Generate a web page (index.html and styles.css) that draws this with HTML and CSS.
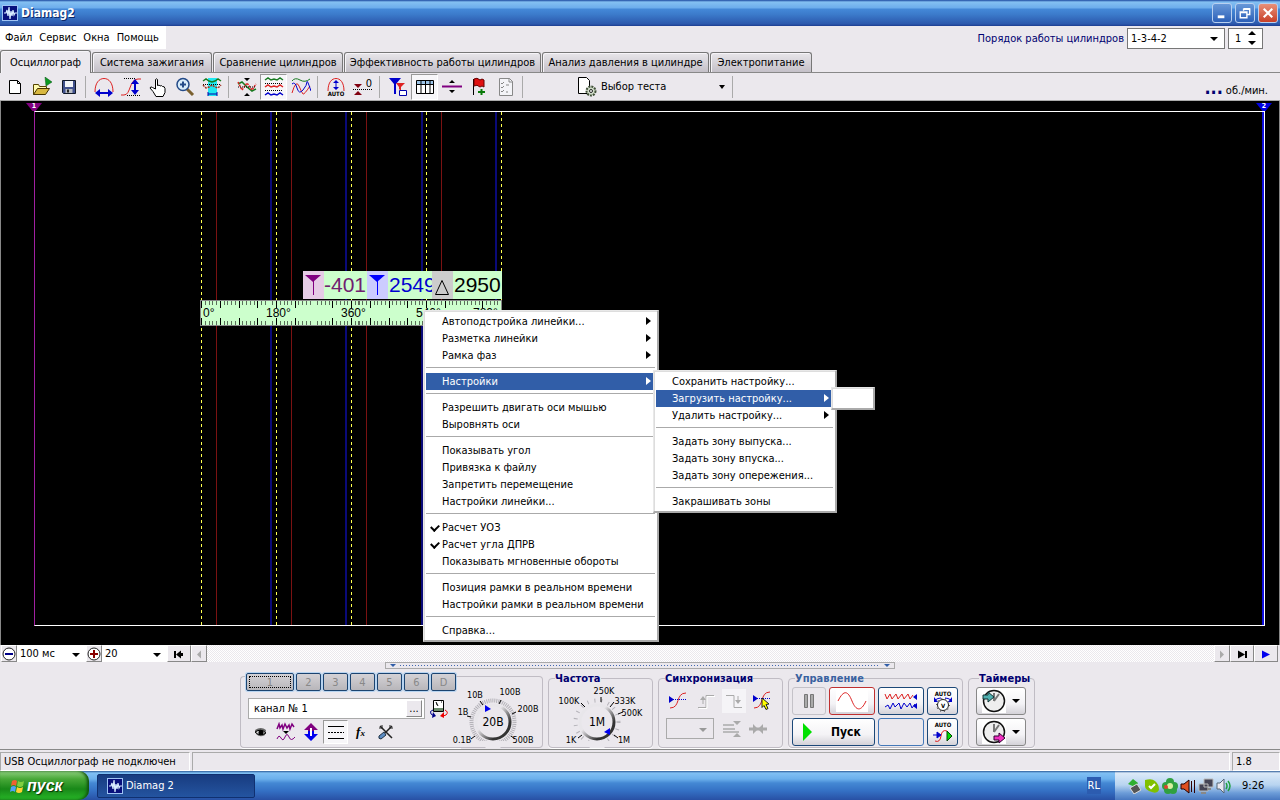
FILE: index.html
```html
<!DOCTYPE html>
<html lang="ru">
<head>
<meta charset="utf-8">
<title>Diamag2</title>
<link rel="stylesheet" href="styles.css">
</head>
<body>
<svg class="defs" aria-hidden="true">
  <symbol id="app" viewBox="0 0 16 16"><rect width="16" height="16" fill="#9fc4f4"/><rect x="1" y="1" width="14" height="14" fill="#08107c"/><path d="M2 8h2l1-3 1 6 1-9 1 12 1-8 1 5 1-6 1 5 1-2h2" fill="none" stroke="#d8ecff" stroke-width="1.2"/></symbol>
</svg>
<header class="titlebar">
  <svg class="i16"><use href="#app"/></svg>
  <h1>Diamag2</h1>
  <button class="win" aria-label="Свернуть"><svg viewBox="0 0 19 19"><path d="M5 13.500h7" stroke="#fff" stroke-width="3"/></svg></button>
  <button class="win" aria-label="Развернуть"><svg viewBox="0 0 19 19"><path d="M8 7V5.500h6.500V11H12M4.500 8.500h7v6h-7zM4 9h8M8 5h7" fill="none" stroke="#fff" stroke-width="1.500"/></svg></button>
  <button class="win close" aria-label="Закрыть"><svg viewBox="0 0 19 19"><path d="M5 5l9 9M14 5l-9 9" stroke="#fff" stroke-width="2.200"/></svg></button>
</header>
<div class="menurow">
  <nav class="menubar"><button>Файл</button><button>Сервис</button><button>Окна</button><button>Помощь</button></nav>
  <label class="order" for="order">Порядок работы цилиндров</label>
  <span class="combo framed w97"><select id="order"><option>1-3-4-2</option></select></span>
  <span class="spin"><input aria-label="Цилиндр" value="1"><svg viewBox="0 0 8 14"><path d="M4 0l4 4H0zM4 14l4-4H0z"/></svg></span>
</div>
<nav class="tabs">
  <button class="tab on t1">Осциллограф</button><button class="tab t2">Система зажигания</button><button class="tab t3">Сравнение цилиндров</button><button class="tab t4">Эффективность работы цилиндров</button><button class="tab t5">Анализ давления в цилиндре</button><button class="tab t6">Электропитание</button>
</nav>
<div class="toolbar">
  <button aria-label="Новый"><svg viewBox="0 0 20 20"><path d="M4.500 3.500h8l3 3v10h-11z" fill="#fff" stroke="#000"/><path d="M12.500 3.500v3h3" fill="none" stroke="#000"/></svg></button>
  <button aria-label="Открыть"><svg viewBox="0 0 20 20"><path d="M1.500 17.500v-10h5l1 2h7v3" fill="#fffbb0" stroke="#554400"/><path d="M1.500 17.500l4-6h12l-4 6z" fill="#d8b840" stroke="#443300"/><path d="M13 0l7 5-6 4z" fill="#0a9a20" stroke="#065010" stroke-width=".5"/></svg></button>
  <button aria-label="Сохранить"><svg viewBox="0 0 20 20"><path d="M3.500 3.500h13v13h-12l-1-1z" fill="#40508c" stroke="#101828"/><path d="M6 4h8v6H6z" fill="#f2f4f8"/><path d="M6.500 12h7v4h-7z" fill="#b8bcc4"/><path d="M8 12.500h2v3H8z" fill="#222"/></svg></button>
  <i class="sep"></i>
  <button aria-label="Период"><svg viewBox="0 0 20 20"><path d="M1 15C1 6 5 1.500 10 1.500S19 6 19 15" fill="none" stroke="#d22"/><path d="M3 16h14" stroke="#00c" stroke-width="2"/><path d="M1 16l5-4v8zM19 16l-5-4v8z" fill="#00c"/></svg></button>
  <button aria-label="Амплитуда"><svg viewBox="0 0 20 20"><path d="M0 18h3C10 18 8 2 17 2h3" fill="none" stroke="#d22"/><path d="M3 1.500h12M6 18.500h14" stroke="#000" stroke-dasharray="1 1"/><path d="M14 5v11" stroke="#00c" stroke-width="2"/><path d="M14 2l4 5h-8zM14 18l4-5h-8z" fill="#00c"/></svg></button>
  <button aria-label="Рука"><svg viewBox="0 0 20 20"><path d="M7.500 12V2.500q1.500-1.500 2 0v6q2-1 2.500.5 2-1 2.500.5 2-.5 2.500 2v4l-2 4h-7l-3-5-3-3.500q.5-2 2.500-.5z" fill="#fff" stroke="#000"/></svg></button>
  <button aria-label="Масштаб"><svg viewBox="0 0 20 20"><path d="M12 12l6 6" stroke="#7a6030" stroke-width="3"/><circle cx="8" cy="7.500" r="6" fill="#d8ecfa" stroke="#234a88" stroke-width="1.500"/><path d="M5 7.500h6M8 4.500v6" stroke="#234a88" stroke-width="2"/></svg></button>
  <button aria-label="Фрагмент"><svg viewBox="0 0 20 20"><path d="M6 1h9v18H6z" fill="#20e8f0"/><path d="M1 4l3-2 3 2 3 1 3-1 3-2 3 2" fill="none" stroke="#177a20" stroke-width="1.500"/><path d="M1 7.500h18" stroke="#000" stroke-dasharray="1 1"/><path d="M1 8l3 3 3-1 3-2 3 2 3 1 3-3" fill="none" stroke="#a03020" stroke-width="1.500" stroke-dasharray="2 1"/><path d="M6 17h9M6 15v4M15 15v4" stroke="#00a"/></svg></button>
  <i class="sep"></i>
  <button aria-label="Совместить"><svg viewBox="0 0 20 20"><path d="M1 7l4-2 5 5 5 4 4-2" fill="none" stroke="#177a20" stroke-width="1.500"/><path d="M1 5l4 8 5-7 5 7 4-6" fill="none" stroke="#d22" stroke-width="1.500" stroke-dasharray="2 1"/><path d="M1 10h18" stroke="#000" stroke-dasharray="1 1"/><path d="M7 1h6l-3 3zM7 19h6l-3-3z"/></svg></button>
  <button class="on" aria-label="Раздельно"><svg viewBox="0 0 20 20"><g fill="none" stroke-width="1.500"><path d="M1 3l3-2 3 2 3-1 3 1 3-2 3 2" stroke="#177a20"/><path d="M1 10l3-2 3 2 3-1 3 1 3-2 3 2" stroke="#d22"/><path d="M1 18l3-2 3 2 3-1 3 1 3-2 3 2" stroke="#00c"/><path d="M1 6.500h18M1 13.500h18" stroke="#000" stroke-width="1" stroke-dasharray="1 1"/></g></svg></button>
  <button aria-label="Наложение"><svg viewBox="0 0 20 20"><g fill="none"><path d="M1 4q3-4 8-1t10-1" stroke="#177a20"/><path d="M1 16q4-14 7-7t4 8 7-8" stroke="#d22"/><path d="M1 7q3-3 5 4t6 2 4-8 4 9" stroke="#00c"/></g></svg></button>
  <i class="sep"></i>
  <button aria-label="Авто"><svg viewBox="0 0 20 20"><path d="M2 14C2 5 6 1.500 10 1.500S18 5 18 14" fill="none" stroke="#d22"/><path d="M10 5v6" stroke="#00c"/><path d="M10 3l3 3H7zM10 13l3-3H7z" fill="#00c"/><text x="10" y="19" class="micro">AUTO</text></svg></button>
  <button aria-label="Обнулить"><svg viewBox="0 0 20 20"><path d="M1 7h8l-4 4zM1 18h8l-4-4z" fill="#800010"/><path d="M0 12.500h20" stroke="#000" stroke-dasharray="1 1"/><text x="16" y="10" class="zero">0</text></svg></button>
  <i class="sep"></i>
  <button aria-label="Маркеры"><svg viewBox="0 0 20 20"><path d="M1 1h12L8 7v10H6V7z" fill="#00c"/><path d="M8 6h9l-4 4v4l-2-2v-2z" fill="#d22"/><path d="M11.500 13.500h7v5h-7z" fill="#fff" stroke="#00a"/></svg></button>
  <button class="on" aria-label="Таблица"><svg viewBox="0 0 20 20"><path d="M1.500 3.500h17v13h-17z" fill="#fff" stroke="#000"/><path d="M2 4h16v3H2z" fill="#9cc4e8"/><path d="M1 7.500h18M6 4v12M10.500 4v12M15 4v12" stroke="#000"/></svg></button>
  <button aria-label="Деление"><svg viewBox="0 0 20 20"><path d="M0 9.500h20" stroke="#800080" stroke-width="2"/><path d="M7 6h6l-3-3zM7 13h6l-3 3z"/></svg></button>
  <button aria-label="Флаг"><svg viewBox="0 0 20 20"><path d="M4.500 2v16" stroke="#000"/><path d="M5 2q3-2 6 1 2-2 4 0v7q-2-2-4 0-3-3-6-1z" fill="#e01010" stroke="#600"/><path d="M9 15h7M12.500 12v6" stroke="#087a08" stroke-width="2"/></svg></button>
  <button aria-label="Список"><svg viewBox="0 0 20 20"><path d="M3.500 1.500h10l3 3v14h-13z" fill="#f4f4f8" stroke="#888"/><path d="M13 1v4h4" fill="none" stroke="#888"/><path d="M5 6l1 1 2-2M5 10l1 1 2-2M5 14l1 1 2-2M10 15h2M10 8h3" fill="none" stroke="#888"/></svg></button>
  <i class="sep"></i>
  <button class="test"><svg viewBox="0 0 20 20"><path d="M1.500.5h8l3 3v13h-11z" fill="#fff" stroke="#000"/><circle cx="14" cy="14" r="4.500" fill="#d0dcc8" stroke="#405038" stroke-width="2" stroke-dasharray="2 1"/><circle cx="14" cy="14" r="1.500" fill="#fff" stroke="#222"/></svg><span>Выбор теста</span><b class="down"></b></button>
  <i class="sep"></i>
  <span class="rpm"><b>...</b>об./мин.</span>
</div>
<main class="scope">
  <div class="frame">
    <svg width="100%" height="100%" shape-rendering="crispEdges">
      <g stroke="#0a0a78" stroke-width="2"><line x1="236" x2="236" y2="100%"/><line x1="311" x2="311" y2="100%"/><line x1="387" x2="387" y2="100%"/><line x1="461" x2="461" y2="100%"/></g>
      <g stroke="#7a1212"><line x1="181.500" x2="181.500" y2="100%"/><line x1="256.500" x2="256.500" y2="100%"/><line x1="331.500" x2="331.500" y2="100%"/><line x1="406.500" x2="406.500" y2="100%"/></g>
      <g stroke="#ffff50" stroke-dasharray="3 3"><line x1="166.500" x2="166.500" y2="100%"/><line x1="241.500" x2="241.500" y2="100%"/><line x1="316.500" x2="316.500" y2="100%"/><line x1="391.500" x2="391.500" y2="100%"/><line x1="466.500" x2="466.500" y2="100%"/></g>
    </svg>
  </div>
  <span class="mark m1">1</span><span class="mark m2">2</span>
  <div class="readout">
    <span class="ico pk"><svg viewBox="0 0 20 28"><path d="M2 4h16l-8 7z" fill="#800080"/><path d="M10.500 8v16" stroke="#800080"/></svg></span><span class="val v1">-401</span>
    <span class="ico bl"><svg viewBox="0 0 20 28"><path d="M2 4h16l-8 7z" fill="#00f"/><path d="M10.500 8v16" stroke="#00f"/></svg></span><span class="val v2">2549</span>
    <span class="ico gr"><svg viewBox="0 0 20 28"><path d="M10 9.500l6.500 14h-13z" fill="none" stroke="#000"/></svg></span><span class="val v3">2950</span>
  </div>
  <div class="ruler">
    <svg viewBox="0 0 720 25" preserveAspectRatio="none" shape-rendering="crispEdges"><path d="M0 2.500h720M0 22.500h720" stroke="#5a6e5a" stroke-width="4" stroke-dasharray="2.400 6.600"/><path d="M0 4h720M0 21h720" stroke="#000" stroke-width="7" stroke-dasharray="2.400 42.600"/></svg>
    <div class="degrees"><span>0°</span><span>180°</span><span>360°</span><span>540°</span><span>720°</span></div>
  </div>
  <div class="menu menu1" role="menu">
    <button class="sub">Автоподстройка линейки...</button><button class="sub">Разметка линейки</button><button class="sub">Рамка фаз</button><hr>
    <button class="sub hot">Настройки</button><hr>
    <button>Разрешить двигать оси мышью</button><button>Выровнять оси</button><hr>
    <button>Показывать угол</button><button>Привязка к файлу</button><button>Запретить перемещение</button><button>Настройки линейки...</button><hr>
    <button class="chk">Расчет УОЗ</button><button class="chk">Расчет угла ДПРВ</button><button>Показывать мгновенные обороты</button><hr>
    <button>Позиция рамки в реальном времени</button><button>Настройки рамки в реальном времени</button><hr>
    <button>Справка...</button>
  </div>
  <div class="menu menu2" role="menu">
    <button>Сохранить настройку...</button><button class="sub hot">Загрузить настройку...</button><button class="sub">Удалить настройку...</button><hr>
    <button>Задать зону выпуска...</button><button>Задать зону впуска...</button><button>Задать зону опережения...</button><hr>
    <button>Закрашивать зоны</button>
  </div>
  <div class="menu menu3" role="menu"><button aria-label="Пусто"></button></div>
</main>
<div class="scroll">
  <button class="sq" aria-label="Уменьшить"><svg viewBox="0 0 16 16"><circle cx="8" cy="8" r="6" fill="#fff" stroke="#222"/><path d="M4 8h8" stroke="#008" stroke-width="2"/></svg></button>
  <span class="combo w69"><select aria-label="Развертка"><option>100 мс</option></select></span>
  <button class="sq" aria-label="Увеличить"><svg viewBox="0 0 16 16"><circle cx="8" cy="8" r="6" fill="#fff" stroke="#222"/><path d="M4 8h8M8 4v8" stroke="#800" stroke-width="2"/></svg></button>
  <span class="combo w64"><select aria-label="Масштаб"><option>20</option></select></span>
  <button class="nav" aria-label="В начало"><svg viewBox="0 0 16 16"><path d="M4 5v7" stroke="#000" stroke-width="2"/><path d="M5 8.500l5-4v8zM9 7h3v3H9z"/></svg></button>
  <button class="sq" aria-label="Назад"><svg viewBox="0 0 16 16"><path d="M6 8.500l4-4v8z" fill="#aaa"/></svg></button>
  <span class="track"></span>
  <button class="sq" aria-label="Вперед"><svg viewBox="0 0 16 16"><path d="M10 8.500l-4-4v8z" fill="#aaa"/></svg></button>
  <button class="nav" aria-label="В конец"><svg viewBox="0 0 16 16"><path d="M12 5v7" stroke="#000" stroke-width="2"/><path d="M11 8.500l-7-4v8z"/></svg></button>
  <button class="nav" aria-label="Пуск"><svg viewBox="0 0 16 16"><path d="M12 8.500l-8-4v8z" fill="#00e"/></svg></button>
</div>
<div class="splitter"><b></b><i></i><b></b></div>
<section class="panel">
  <fieldset class="channel">
    <div class="chans"><button class="first">1</button><button>2</button><button>3</button><button>4</button><button>5</button><button>6</button><button>D</button></div>
    <div class="chname"><span class="box"><input aria-label="Имя канала" value="канал № 1"><button aria-label="Выбрать">...</button></span><svg class="i20" viewBox="0 0 20 20"><path d="M4.500 1.500h10v11h-10z" fill="#fff" stroke="#000"/><path d="M5 9h9v3H5z" fill="#6a8a6a"/><path d="M7 3l2 4M12 3h1M7 5h1" stroke="#000"/><path d="M4 11q-4 1-2 4l3 2" fill="none" stroke="#008"/><path d="M4 13l3 4-4 2z" fill="#008"/><path d="M16 11q4 2 1 5l-3 1" fill="none" stroke="#e00"/><path d="M15 13l-4 4 4 2z" fill="#e00"/></svg></div>
    <div class="chtools">
      <button aria-label="Видимость"><svg viewBox="0 0 20 20"><path d="M4 8q6-4 11 0l-1 5q-5 3-9-1z" fill="#666"/><path d="M4 10q6-4 11 1-6 4-11-1z" fill="#ddd" stroke="#000"/><circle cx="10" cy="10.500" r="2.500"/></svg></button>
      <button aria-label="Фильтр"><svg viewBox="0 0 20 20"><path d="M1 7l2-5 1 4 2-3 1 4 2-5 2 4 2-3 1 4 2-5 2 3" fill="none" stroke="#800080" stroke-width="1.500"/><path d="M7 9h6l-3 3z"/><path d="M1 17q2-5 4-1t4-1 4 0 6 0" fill="none" stroke="#800080"/></svg></button>
      <button aria-label="Инверсия"><svg viewBox="0 0 20 20"><path d="M10 1l7 7h-4v3H7V8H3z" fill="#800080"/><path d="M10 19l7-7h-4V9H7v3H3z" fill="#00e"/><path d="M10 6v8" stroke="#fff" stroke-width="2"/></svg></button>
      <button class="on" aria-label="Линии"><svg viewBox="0 0 20 20"><path d="M2 4.500h16M2 16.500h16" stroke="#000"/><path d="M2 10.500h16" stroke="#000" stroke-dasharray="2 1"/></svg></button>
      <button aria-label="Функция"><em>f<small>x</small></em></button>
      <button aria-label="Настройки"><svg viewBox="0 0 20 20"><path d="M4 4l12 12M16 4l-7 7" stroke="#222" stroke-width="1.500"/><path d="M14 3v3h3M3 6h3V3" fill="none" stroke="#222"/><path d="M8 10l-5 4q-1 3 2 3l5-4z" fill="#5c8cc4" stroke="#234"/></svg></button>
    </div>
  </fieldset>
  <div class="knob kv"><svg viewBox="0 0 86 70">
    <defs><linearGradient id="k" x1="0" y1="0" x2="1" y2="1"><stop offset=".4" stop-color="#e8e6ea"/><stop offset=".75" stop-color="#333"/></linearGradient></defs>
    <circle cx="37" cy="43" r="21.500" fill="none" stroke="#b4b2b8" stroke-width="4" stroke-dasharray="1 1"/>
    <path d="M23 62h28l-7 7H30z" fill="#ebe8ed"/>
    <circle cx="37" cy="43" r="17" fill="#ebe8ed" stroke="url(#k)" stroke-width="3"/><path d="M24 22l3 4M43 25l2-4M56 35l4-2M55 57l4 3M19 57l-4 3M15 38l-4-1" stroke="#000"/><path d="M29 26l6 4-6 3z" fill="#00e"/>
    <text x="37" y="47" class="kval">20В</text><text x="19" y="19">10В</text><text x="54" y="16">100В</text><text x="7" y="36">1В</text><text x="72" y="33">200В</text><text x="6" y="64">0.1В</text><text x="67" y="64">500В</text></svg></div>
  <fieldset class="freq"><legend>Частота</legend><div class="knob kf"><svg viewBox="0 0 94 70">
    <circle cx="45" cy="43" r="21.500" fill="none" stroke="#b4b2b8" stroke-width="4" stroke-dasharray="1 6"/>
    <path d="M33 62h26l-7 7H38z" fill="#ebe8ed"/>
    <circle cx="45" cy="43" r="17" fill="#ebe8ed" stroke="url(#k)" stroke-width="3"/><path d="M29 24l4 4M49 18v5M58 28l4-5M66 35l5-2M62 56l4 3M30 56l-4 3" stroke="#000"/><path d="M58 49v7l-6-3z" fill="#00e"/>
    <text x="45" y="47" class="kval">1М</text><text x="52" y="15">250K</text><text x="17" y="25">100K</text><text x="73" y="25">333K</text><text x="80" y="37">500K</text><text x="19" y="64">1K</text><text x="72" y="64">1М</text></svg></div></fieldset>
  <fieldset class="sync"><legend>Синхронизация</legend>
    <div class="row4">
      <button aria-label="Уровень"><svg viewBox="0 0 20 20"><path d="M2 17C13 17 7 2 18 2" fill="none" stroke="#d22"/><path d="M5 8.500h13" stroke="#00c" stroke-dasharray="1 1"/><path d="M1 5l5 3.500L1 12z" fill="#00c"/></svg></button>
      <button aria-label="Фронт"><svg viewBox="0 0 20 20"><path d="M2 16.500h8v-12h8" fill="none" stroke="#aaa"/><path d="M3 17.500h8v-12h8" fill="none" stroke="#fff"/><path d="M7 13V8" stroke="#aaa"/><path d="M4 9h6L7 5z" fill="#aaa"/></svg></button>
      <button class="hatch" aria-label="Спад"><svg viewBox="0 0 20 20"><path d="M2 4.500h8v12h8" fill="none" stroke="#aaa"/><path d="M14 5v6" stroke="#aaa"/><path d="M11 9h6l-3 4z" fill="#aaa"/></svg></button>
      <button aria-label="Курсор"><svg viewBox="0 0 20 20"><path d="M2 17C13 17 7 1 18 1" fill="none" stroke="#d22"/><path d="M1 7.500h18" stroke="#00c" stroke-dasharray="1 1"/><path d="M1 4l5 3.500L1 11z" fill="#00c"/><path d="M10 7l7 6-3 .5 2 4-2 1-2-4-2 2z" fill="#ff0" stroke="#222"/></svg></button>
    </div>
    <div class="row3"><span class="combo framed off"><select aria-label="Источник" disabled><option></option></select></span><svg class="i20" viewBox="0 0 20 20"><path d="M2 6h11M2 13h16M2 10h12" stroke="#aaa" stroke-width="1.500"/><path d="M12 2h8l-4 4zM12 18h8l-4-4z" fill="#aaa"/></svg><svg class="i20" viewBox="0 0 20 20"><path d="M1 10h18" stroke="#aaa" stroke-width="3"/><path d="M5 5l5 5-5 5zM15 5l-5 5 5 5z" fill="#aaa"/></svg></div>
  </fieldset>
  <fieldset class="ctrl"><legend>Управление</legend>
    <div class="grid">
      <div class="two"><button class="btn dis" aria-label="Пауза"><svg viewBox="0 0 20 20"><path d="M5.500 3.500h3v13h-3zM11.500 3.500h3v13h-3z" fill="#aaa" stroke="#777"/></svg></button><button class="btn red" aria-label="Сигнал"><svg class="sine" viewBox="0 0 32 22"><path d="M0 0h32v22H0z" fill="#fff"/><path d="M2 11C8-1 12 1 16 11s9 11 14 0" fill="none" stroke="#d22"/></svg></button></div>
      <button class="btn" aria-label="Сигналы"><svg class="sine" viewBox="0 0 34 22"><path d="M1 4l2 5 3-5 2 5 4-5 2 5 4-5 2 5 4-5 2 5 3-4" fill="none" stroke="#d22"/><path d="M1 17l3-2 2 4 3-6 2 4 4-4 2 6 3-6 3 4 3-4 2 5 3-4" fill="none" stroke="#00c"/><path d="M29 7l4-3v6zM29 16l4-3v6z" fill="#00c"/></svg></button>
      <button class="btn" aria-label="Авто"><svg class="i22" viewBox="0 0 22 22"><text x="11" y="6" class="micro">AUTO</text><circle cx="11" cy="15" r="5.500" fill="#fff" stroke="#222"/><circle cx="11" cy="15" r="6.500" fill="none" stroke="#222" stroke-dasharray="1 3"/><path d="M3 10q3-2 6-2M19 10q-3-2-6-2" fill="none" stroke="#00c"/><path d="M2 7v5h4zM20 7v5h-4z" fill="#00c"/><text x="11" y="18" class="micro">V</text></svg></button>
      <button class="btn start"><svg viewBox="0 0 14 20"><path d="M2 1l9 9-9 9z" fill="#00e000"/></svg>Пуск</button>
      <button class="btn empty" aria-label="Состояние"></button>
      <button class="btn" aria-label="Автозапуск"><svg class="i22" viewBox="0 0 22 22"><text x="11" y="6" class="micro">AUTO</text><path d="M3 20q5 2 6-5t6-5" fill="none" stroke="#d22"/><path d="M1 14h4M5 11l4 3-4 3z" stroke="#00c" fill="#00c"/><path d="M15 10l5 5-5 5z" fill="#0d0" stroke="#040"/></svg></button>
    </div>
  </fieldset>
  <fieldset class="timers"><legend>Таймеры</legend>
    <button class="btn tm" aria-label="Таймер пуска"><svg viewBox="0 0 24 24"><path d="M0 0h24v24H0z" fill="#fff"/><circle cx="12" cy="12" r="10.500" fill="#eee" stroke="#111" stroke-width="1.500"/><path d="M12 12V4M12 12l5-7" stroke="#777" stroke-width="2"/><path d="M1 6h5V3l6 5-6 5v-3H1z" fill="#50b0b0" stroke="#133"/></svg><b class="down"></b></button>
    <button class="btn tm" aria-label="Таймер остановки"><svg viewBox="0 0 24 24"><path d="M0 0h24v24H0z" fill="#fff"/><circle cx="12" cy="12" r="10.500" fill="#eee" stroke="#111" stroke-width="1.500"/><path d="M12 12V4M12 12l5-7" stroke="#777" stroke-width="2"/><path d="M12 16h5v-3l6 5-6 5v-3h-5z" fill="#f030c0" stroke="#303"/></svg><b class="down"></b></button>
  </fieldset>
</section>
<footer class="status"><span class="s1">USB Осциллограф не подключен</span><span class="s2"></span><span class="s3">1.8</span></footer>
<div class="taskbar">
  <button class="startbtn"><svg viewBox="0 0 16 16"><path d="M2 3q3-2 5 0L6 8q-2-2-5 0z" fill="#f06030"/><path d="M8 3q3 2 6 0l-1 5q-3 2-6 0z" fill="#80d040"/><path d="M1 9q3-2 5 0l-1 5q-2-2-5 0z" fill="#50a0f8"/><path d="M7 9q3 2 6 0l-1 5q-3 2-6 0z" fill="#ffd030"/></svg>пуск</button>
  <button class="task"><svg class="i16"><use href="#app"/></svg>Diamag 2</button>
  <span class="lang">RL</span>
  <div class="tray">
    <svg viewBox="0 0 16 16"><path d="M2 6l5-5 5 4-3 4z" fill="#30b030"/><path d="M4 10l7-4 4 6-7 4z" fill="#555" stroke="#ddd"/></svg>
    <svg viewBox="0 0 16 16"><path d="M1 2q7-2 10 1 4 3 4 9-2 4-7 2Q1 12 1 8z" fill="#80c000"/><path d="M5 8l2 2 4-4" fill="none" stroke="#fff" stroke-width="2"/></svg>
    <svg viewBox="0 0 16 16"><g fill="#30a040"><circle cx="8" cy="4" r="4"/><circle cx="4" cy="8" r="4"/><circle cx="12" cy="8" r="4"/><circle cx="6" cy="12" r="4"/><circle cx="11" cy="12" r="4"/></g><circle cx="8" cy="8" r="3" fill="#d8f0a0"/><circle cx="4" cy="9" r="2" fill="#e04030"/></svg>
    <svg viewBox="0 0 16 16"><path d="M1 6h3l5-4v13l-5-4H1z" fill="#e05020" stroke="#200"/><path d="M11.500 3v11M14.500 2v13" stroke="#300"/></svg>
    <svg viewBox="0 0 16 16"><path d="M6 1h9v8H6zM1 6h9v7H1z" fill="#445" stroke="#bbb"/><path d="M3 15h5M9 11h4" stroke="#888" stroke-width="2"/></svg>
    <svg viewBox="0 0 16 16"><path d="M1 5h3l4-4v14l-4-4H1z" fill="#e8e8f0" stroke="#567"/><path d="M10 5q2 3 0 6M12 3q4 5 0 10" fill="none" stroke="#20a040" stroke-width="1.500"/></svg>
    <time>9:26</time>
  </div>
</div>
</body>
</html>
```
FILE: styles.css
```css
* { box-sizing: border-box; }
body { margin: 0; height: 100vh; display: flex; flex-direction: column; overflow: hidden; background: #ebe8ed; color: #000; font: 11px/17px "DejaVu Sans Condensed", "Liberation Sans", sans-serif; }
button, input, select { font: inherit; color: inherit; margin: 0; padding: 0; border: 0; background: none; border-radius: 0; }
button { display: flex; align-items: center; justify-content: center; white-space: nowrap; }
select { appearance: none; width: 100%; height: 100%; padding-left: 3px; background: transparent; opacity: 1; }
svg { display: block; flex: none; }
.defs { display: none; }
.i16 { width: 16px; height: 16px; }
.i20 { width: 20px; height: 20px; }
.i22 { width: 22px; height: 22px; }
.down { width: 0; height: 0; border: 3px solid transparent; border-top: 4px solid #000; border-bottom: 0; }

.titlebar { height: 26px; flex: none; display: flex; align-items: center; gap: 2px; padding: 0 2px; background: linear-gradient(#1c48a0 0, #84c0f2 2px, #6cacec 8px, #4488d8 9px, #3c7ccc 14px, #2c58ac 24px, #1c3c90); }
.titlebar h1 { margin: 0; flex: 1; padding-left: 1px; color: #fff; font: bold 12px/18px "DejaVu Sans Condensed", sans-serif; text-shadow: 1px 1px #0c2868; }
.win { width: 20px; height: 20px; margin-left: 1px; border: 1px solid #b8d0f0; border-radius: 3px; background: linear-gradient(#6898d8, #2c60b8); }
.win svg { width: 18px; height: 18px; }
.close { background: linear-gradient(#e89078, #c84028); }

.menurow { height: 24px; flex: none; display: flex; align-items: center; padding-right: 17px; gap: 3px; }
.menubar { display: flex; height: 23px; width: 166px; align-self: flex-start; background: #fff; padding-left: 5px; gap: 7px; }
.order { margin-left: auto; color: #000070; }
.combo { position: relative; display: block; background: #fff; height: 17px; flex: none; }
.combo::after { content: ""; position: absolute; right: 6px; top: 50%; margin-top: -1px; border: 4px solid transparent; border-top-color: #000; border-bottom: 0; pointer-events: none; }
.framed { border: 1px solid #777; height: 21px; }
.w97 { width: 98px; }
.w69 { width: 69px; }
.w64 { width: 65px; }
.spin { display: flex; align-items: center; width: 35px; height: 21px; background: #fff; border: 1px solid #777; padding: 0 6px; }
.spin input { width: 12px; flex: 1; }
.spin svg { width: 8px; height: 14px; }

.tabs { height: 23px; flex: none; display: flex; align-items: flex-end; gap: 1px; border-bottom: 1px solid #888; }
.tab { height: 20px; border: 1px solid #777; border-bottom: 0; border-radius: 3px 3px 0 0; background: linear-gradient(#e8e6ea, #c4c0c8); box-shadow: inset 1px 1px #f6f4f8; }
.tab.on { height: 23px; margin-bottom: -1px; background: #ebe8ed; }
.t1 { width: 91px; }
.t2 { width: 120px; }
.t3 { width: 130px; }
.t4 { width: 197px; }
.t5 { width: 167px; }
.t6 { width: 102px; }

.toolbar { height: 28px; flex: none; display: flex; align-items: center; padding: 0 12px 0 1px; border-bottom: 1px solid #aaa; }
.toolbar button { width: 27px; height: 26px; }
.toolbar svg, .chtools svg, .row4 svg { width: 20px; height: 20px; }
.toolbar .on, .chtools .on { border: 1px solid #999; border-right-color: #fff; border-bottom-color: #fff; background: #f7f6f9; }
.sep { width: 8px; height: 22px; flex: none; background: linear-gradient(#aaa, #aaa) 3px 0 / 1px 100% no-repeat; }
.toolbar .test { width: 202px; padding-left: 50px; padding-right: 4px; gap: 4px; justify-content: flex-start; }
.test .down { margin-left: auto; }
.rpm { margin-left: auto; align-self: flex-end; padding-bottom: 1px; }
.rpm b { color: #000070; font-size: 18px; margin-right: 3px; }
.micro { font: bold 6px "DejaVu Sans Condensed", sans-serif; text-anchor: middle; }
.zero { font: 11px "DejaVu Sans Condensed", sans-serif; text-anchor: middle; }

.scope { position: relative; flex: 1; min-height: 0; background: #000; border-left: 1px solid #888; border-right: 1px solid #888; }
.frame { position: absolute; inset: 10px 14px 19px 33px; border: 1px solid #fff; border-left-color: #a020a0; box-shadow: inset -2px 0 #1010e0; }
.mark { position: absolute; top: 2px; width: 16px; height: 8px; color: #fff; font: bold 7px/7px "DejaVu Sans Condensed", sans-serif; text-align: center; clip-path: polygon(0 0, 100% 0, 60% 100%, 40% 100%); }
.m1 { left: 25px; background: #800080; }
.m2 { right: 7px; background: #0000e0; }
.readout { position: absolute; left: 302px; top: 170px; display: flex; height: 28px; background: #cfc; font: 21px/28px "Liberation Sans", sans-serif; }
.ico { position: relative; width: 21px; }
.ico svg { width: 20px; height: 28px; }
.pk { background: #e6cce6; }
.bl { background: #ccf; }
.gr { background: #ccc; }
.v1 { width: 43px; color: #702070; }
.v2 { width: 44px; padding-left: 1px; color: #0000d0; }
.v3 { width: 49px; padding-left: 1px; }
.ruler { position: absolute; left: 199px; top: 199px; width: 302px; height: 26px; background: #cfc; border: 1px solid #888; }
.ruler svg { width: 100%; height: 24px; }
.degrees { position: absolute; inset: 4px 0 3px 2px; display: grid; grid-template-columns: 63px 75px 75px 57px auto; font: 12px/17px "Liberation Sans", sans-serif; }
.menu { position: absolute; background: #fff; border: 1px solid #e8e8e8; border-right: 2px solid #aaa; border-bottom: 2px solid #aaa; box-shadow: inset 1px 1px #ddd; padding: 2px 2px 1px; }
.menu button { position: relative; width: 100%; height: 17px; padding-left: 16px; justify-content: flex-start; }
.menu hr { height: 9px; margin: 0; border: 0; background: linear-gradient(#aaa, #aaa) 0 3px / 100% 1px no-repeat; }
.menu .hot { background: #315ea8; color: #fff; }
.sub::after { content: ""; position: absolute; right: 4px; top: 4px; border: 4px solid transparent; border-left: 5px solid currentColor; border-right: 0; }
.chk::before { content: ""; position: absolute; left: 5px; top: 5px; width: 6px; height: 4px; border-left: 2px solid #000; border-bottom: 2px solid #000; rotate: -45deg; }
.menu1 { left: 422px; top: 209px; width: 236px; }
.menu2 { left: 652px; top: 269px; width: 184px; }
.menu3 { left: 830px; top: 286px; width: 44px; }

.scroll { display: flex; height: 17px; flex: none; padding: 0 2px 0 1px; }
.sq, .nav { width: 16px; height: 17px; background: #ebe8ed; border: 1px solid #fff; border-right-color: #888; border-bottom-color: #888; }
.nav { width: 24px; }
.scroll svg { width: 16px; height: 16px; }
.track { flex: 1; background: repeating-conic-gradient(#fff 0 25%, #ebe8ed 0 50%) 0 0 / 2px 2px; }

.splitter { width: 510px; height: 7px; flex: none; align-self: center; display: flex; align-items: center; gap: 4px; padding: 0 4px; border: 1px solid #aaa; }
.splitter i { flex: 1; height: 1px; background: repeating-linear-gradient(90deg, #4068b0 0 1px, transparent 1px 3px); }
.splitter b { border: 3px solid transparent; border-top-color: #315ea8; border-bottom: 0; }

.panel { height: 81px; flex: none; display: flex; justify-content: center; align-items: flex-end; gap: 5px; padding: 0 5px 1px 0; border-bottom: 1px solid #888; }
fieldset { height: 76px; min-width: 0; margin: 0; padding: 2px 3px 0; border: 1px solid #c0bcc4; border-radius: 4px; box-shadow: 0 1px #fff; }
legend { margin-left: 3px; padding: 0; color: #000070; font: bold 11px/13px "DejaVu Sans Condensed", sans-serif; }
.channel { width: 221px; height: 72px; display: flex; flex-direction: column; border-right: 0; border-radius: 4px 0 0 4px; padding: 0 5px; }
.chans { display: flex; gap: 2px; margin-top: -4px; }
.chans button { width: 25px; height: 18px; border: 1px solid #1c4470; border-radius: 2px; background: linear-gradient(#d4d2d6, #b8b6ba); box-shadow: 0 0 0 1px #b8d4f0; color: #888; }
.chans .first { width: 48px; outline: 1px dotted #000; outline-offset: -4px; }
.chname { display: flex; gap: 4px; margin: 7px 0 1px 2px; align-items: center; }
.box { display: flex; width: 177px; height: 21px; border: 1px solid #aaa; background: #fff; padding: 1px 2px; }
.box input { flex: 1; min-width: 0; padding-left: 3px; }
.box button { width: 16px; background: #ebe8ed; border: 1px solid #fff; border-right-color: #888; border-bottom-color: #888; line-height: 8px; }
.chtools { display: flex; margin-left: 2px; }
.chtools button { width: 25px; height: 24px; }
.chtools em { font: italic bold 13px/16px "Liberation Serif", serif; }
.chtools small { font-size: 9px; }
.knob text { font: 9px "DejaVu Sans Condensed", sans-serif; text-anchor: middle; }
.knob .kval { font-size: 12px; }
.kv { width: 87px; height: 72px; margin-left: -10px; padding-top: 2px; border: 1px solid #c0bcc4; border-left: 0; border-radius: 0 4px 4px 0; }
.kv svg { width: 86px; height: 70px; overflow: visible; }
.freq { width: 105px; }
.kf svg { width: 94px; height: 70px; margin-top: -8px; overflow: visible; }
.freq .knob { height: 60px; }
.sync { width: 125px; }
.row4, .row3 { display: flex; gap: 4px; align-items: center; padding-left: 4px; }
.row4 button { width: 24px; height: 24px; }
.row4 { margin-top: 2px; }
.row3 { margin-top: 5px; gap: 7px; }
.hatch { background: #f5f4f7; }
.off { width: 48px; background: #ebe8ed; border-color: #aaa; }
.off::after { border-top-color: #999; }
.ctrl { width: 175px; }
.ctrl legend { color: #3a62a0; }
.grid { display: grid; grid-template-columns: 83px 46px 31px; gap: 3px; }
.two { display: flex; gap: 3px; }
.btn { height: 28px; border: 1px solid #1c4878; border-radius: 3px; background: linear-gradient(#fff, #f4f3f6 60%, #d4d2d8); }
.dis { width: 34px; border-color: #c4c2c8; background: #ebe8ed; }
.dis svg { width: 20px; height: 20px; }
.red { width: 46px; border-color: #c03030; }
.sine { width: 34px; height: 22px; }
.empty { border-color: #4478b8; background: #ebe8ed; }
.start { gap: 16px; justify-content: flex-start; padding-left: 8px; font: bold 12px/16px "DejaVu Sans Condensed", sans-serif; }
.start svg { width: 14px; height: 20px; }
.timers { width: 67px; padding-left: 7px; }
.tm { width: 50px; margin-bottom: 3px; border-color: #888; gap: 6px; }
.tm svg { width: 24px; height: 24px; }
.tm .down { border-width: 4px 4px 0; }

.status { display: flex; height: 20px; flex: none; gap: 2px; padding-top: 1px; margin-top: 1px; }
.status span { border: 1px solid #aaa; border-right-color: #fff; border-bottom-color: #fff; padding-left: 3px; }
.s1 { width: 190px; }
.s2 { flex: 1; }
.s3 { width: 48px; }
.taskbar { display: flex; align-items: center; height: 29px; flex: none; color: #fff; background: linear-gradient(#2c5c98 0, #80c0f4 2px, #6cb0ec 8px, #4488d4 12px, #3470c4 20px, #2850a4); }
.startbtn { width: 89px; height: 29px; justify-content: flex-start; gap: 1px; padding-left: 10px; border-radius: 0 10px 10px 0; background: linear-gradient(#90d080 0, #48a838 8px, #188818 18px, #28b828); box-shadow: inset -2px 0 3px #105010; font: italic bold 16px/20px "Liberation Sans", sans-serif; text-shadow: 1px 1px 1px #043004; }
.startbtn svg { width: 16px; height: 16px; }
.task { width: 158px; height: 24px; margin-left: 8px; padding-left: 9px; gap: 3px; justify-content: flex-start; border: 1px solid #103070; border-radius: 2px; background: linear-gradient(#183c80, #2454a0); }
.lang { margin-left: auto; background: #2c5cb0; padding: 0 1px; }
.tray { display: flex; align-items: center; gap: 2px; width: 165px; height: 29px; margin-left: 14px; padding-left: 11px; background: linear-gradient(#2c5c98 0, #dceaf8 2px, #b8d4f0 14px, #6c9cd8 22px, #4878c0); color: #000; }
.tray svg { width: 16px; height: 16px; }
.tray time { margin-left: 8px; }
```
